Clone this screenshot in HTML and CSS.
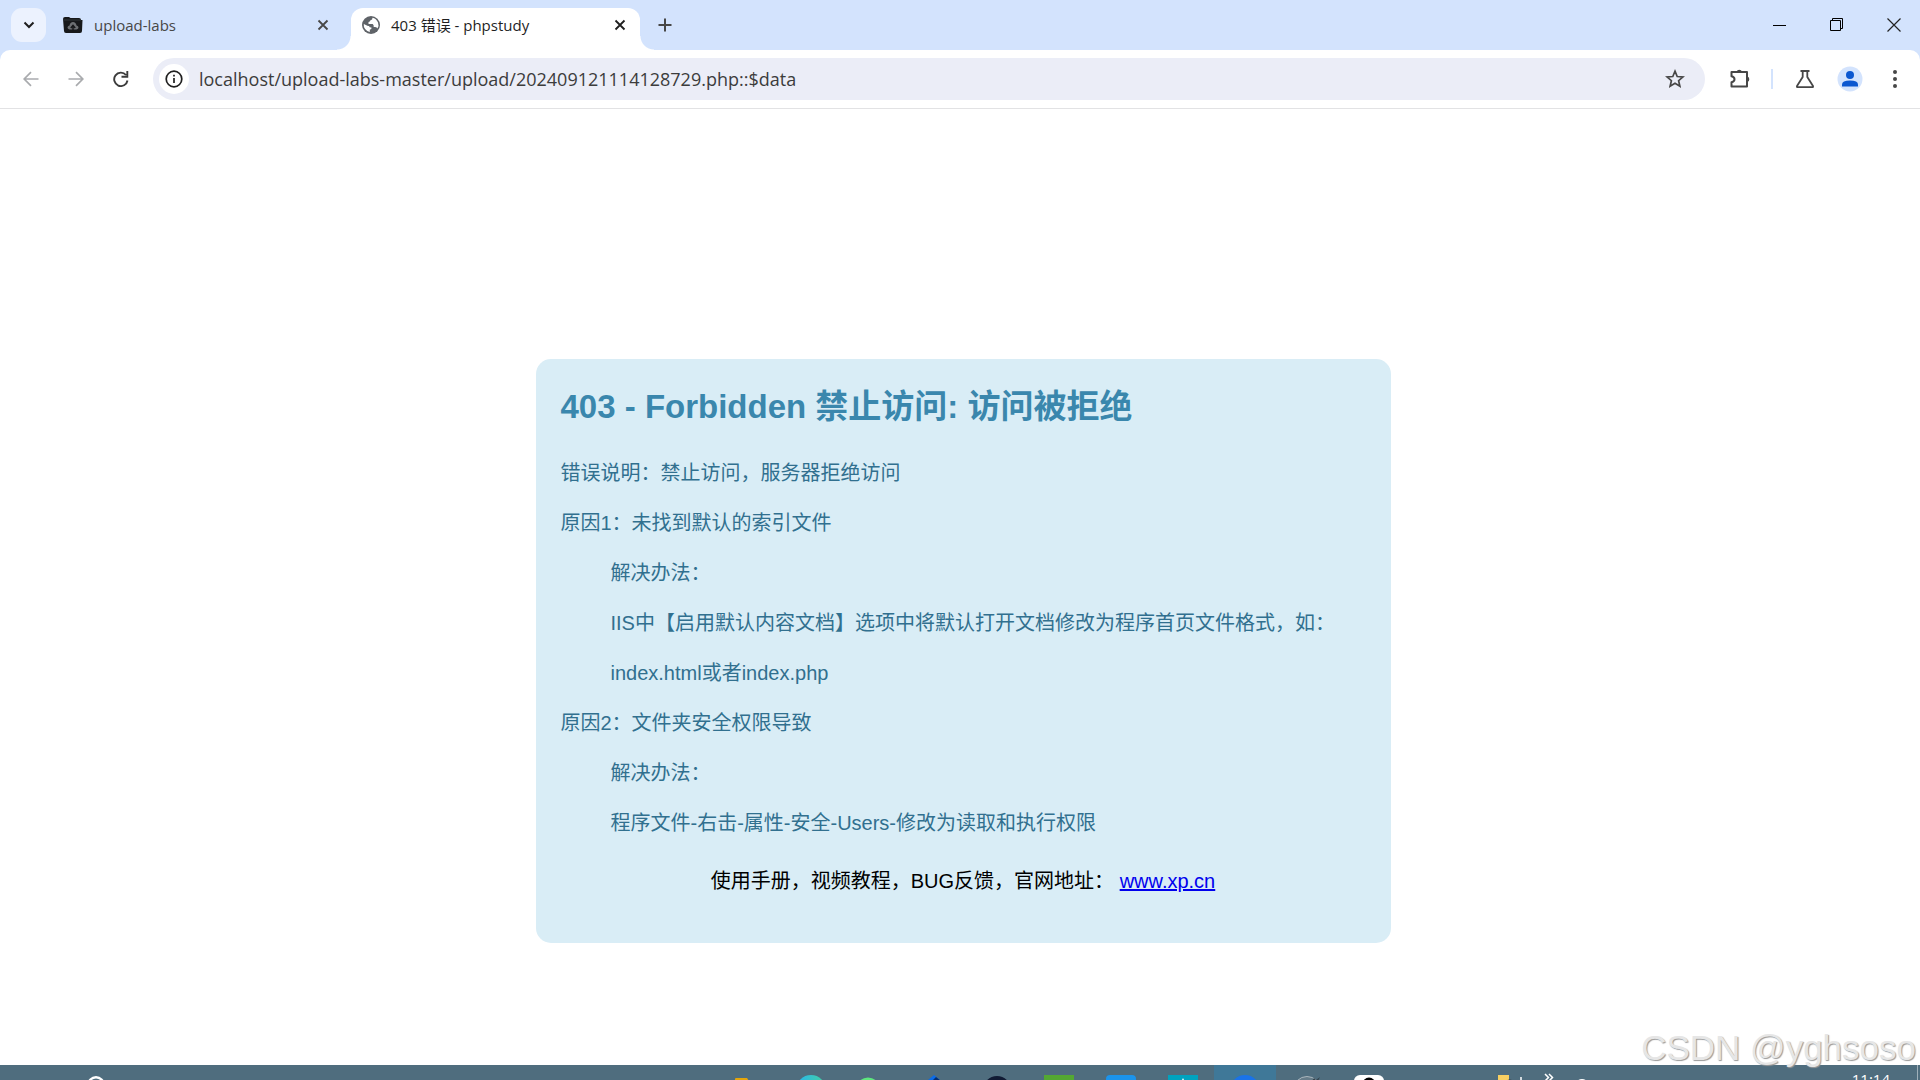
FILE: index.html
```html
<!DOCTYPE html>
<html lang="zh-CN">
<head>
<meta charset="utf-8">
<title>403 错误 - phpstudy</title>
<link rel="stylesheet" href="styles.css">
</head>
<body>
<header class="browser">
  <div class="tabstrip">
    <button class="tab-search" type="button" aria-label="搜索标签页">
      <svg width="12" height="8" viewBox="0 0 12 8" fill="none" stroke="#1f1f1f" stroke-width="2"><path d="M1.5 1.5 6 6l4.5-4.5"/></svg>
    </button>
    <div class="tab">
      <svg width="20" height="18" viewBox="0 0 20 18"><path d="M0 3q0-2 2-2h4l1.500 1H16q2 0 2 2h1.500l-.5 11q0 2-2 2H3q-2 0-2-2z" fill="#17191b"/><path d="M0 4h18" stroke="#33383a"/><path d="M6.500 13.500q-2-.3-2-2t2-2q.7-3.500 3.500-3.500t3.500 3.500q2 .3 2 2t-2 2z" fill="#6c6f72"/><path d="M10 15.500V10M7.800 12 10 9.500l2.200 2.500" fill="none" stroke="#17191b" stroke-width="1.500"/></svg>
      <span class="tab-title">upload-labs</span>
      <button class="tab-close" type="button" aria-label="关闭 upload-labs">
        <svg width="12" height="12" viewBox="0 0 12 12" fill="none" stroke="#474747" stroke-width="1.800"><path d="m1.500 1.500 9 9m0-9-9 9"/></svg>
      </button>
    </div>
    <div class="tab tab-active">
      <svg width="18" height="18" viewBox="0 0 18 18"><circle cx="9" cy="9" r="9" fill="#5f6368"/><path d="M10.500 1.700Q10.600 4 8.500 4.200q-.5 1.800-2 1.800v2h4.200q1.300.8 1 3h1.500q1.800.1 2.200 1.600Q17.300 9.500 16 6.500q-1.800-4-5.500-4.800zM1.800 8q-.4 2.800 1.300 5.100 1.900 2.500 4.700 2.800v-2.200q2.200-.2 1.700-2.200Q7.200 11.500 7 10q-1.600.2-2.600-.7z" fill="#fff"/></svg>
      <span class="tab-title">403 错误 - phpstudy</span>
      <button class="tab-close" type="button" aria-label="关闭 403 错误">
        <svg width="12" height="12" viewBox="0 0 12 12" fill="none" stroke="#1f1f1f" stroke-width="1.800"><path d="m1.500 1.500 9 9m0-9-9 9"/></svg>
      </button>
    </div>
    <button class="new-tab" type="button" aria-label="新标签页">
      <svg width="14" height="14" viewBox="0 0 14 14" stroke="#474747" stroke-width="2"><path d="M7 .5v13M.5 7h13"/></svg>
    </button>
    <div class="window-buttons">
      <button type="button" aria-label="最小化"><svg width="14" height="14" viewBox="0 0 14 14"><path d="M0 7.500h13" stroke="#000"/></svg></button>
      <button type="button" aria-label="还原"><svg width="14" height="14" viewBox="0 0 14 14" fill="none" stroke="#000"><path d="M.5 2.500h10v10H.5zM2.500 2.500v-2h10v10h-2"/></svg></button>
      <button type="button" aria-label="关闭"><svg width="14" height="14" viewBox="0 0 14 14" stroke="#222" stroke-width="1.200"><path d="m.5.5 13 13m0-13-13 13"/></svg></button>
    </div>
  </div>
  <div class="toolbar">
    <div class="nav-buttons">
      <button type="button" aria-label="后退"><svg width="16" height="16" viewBox="0 0 16 16" fill="none" stroke="#a9abae" stroke-width="1.700"><path d="M15.500 8H1.500M8 1.200 1.200 8 8 14.800"/></svg></button>
      <button type="button" aria-label="前进"><svg width="16" height="16" viewBox="0 0 16 16" fill="none" stroke="#a9abae" stroke-width="1.700"><path d="M.5 8h14M8 1.200 14.800 8 8 14.800"/></svg></button>
      <button type="button" aria-label="重新加载"><svg width="16" height="16" viewBox="0 0 16 16" fill="none" stroke="#3c3c3c" stroke-width="1.900"><path d="M13 4A6.700 6.700 0 1 0 14.500 9.500M14.300 0v5.800H8.500"/></svg></button>
    </div>
    <div class="omnibox">
      <button class="site-info" type="button" aria-label="查看网站信息">
        <svg width="18" height="18" viewBox="0 0 18 18" fill="none" stroke="#1f1f1f" stroke-width="1.700"><circle cx="9" cy="9" r="7.800"/><path d="M9 8v5M9 4.800v1.800"/></svg>
      </button>
      <input class="url" type="text" aria-label="地址栏" value="localhost/upload-labs-master/upload/202409121114128729.php::$data">
      <button class="bookmark" type="button" aria-label="收藏">
        <svg width="20" height="20" viewBox="0 0 20 20" fill="none" stroke="#474747" stroke-width="1.700"><path d="m10 2.200 2.200 5.300 5.700.5-4.300 3.700 1.300 5.600-4.900-3-4.900 3 1.300-5.600L2.100 8l5.700-.5z"/></svg>
      </button>
    </div>
    <div class="actions">
      <button type="button" aria-label="扩展程序"><svg width="22" height="22" viewBox="0 0 22 22"><path d="M2.500 4h15.500v14.500H2.500v-4.200q3-.6 3-3t-3-3z" fill="none" stroke="#474747" stroke-width="2" stroke-linejoin="round"/><path d="M7.500 3.500a3 3 0 0 1 5.500 0zM18.500 8.500a3 3 0 0 1 0 5.500z" fill="#474747"/></svg></button>
      <span class="divider"></span>
      <button type="button" aria-label="实验室"><svg width="20" height="20" viewBox="0 0 20 20" fill="none" stroke="#474747" stroke-width="1.800"><path d="M5.500 2h9M7.700 2v6L2 17q-.4 1.200.8 1.200h14.400q1.200 0 .8-1.200l-5.700-9V2" stroke-linejoin="round"/></svg></button>
      <button type="button" aria-label="个人资料"><svg width="26" height="26" viewBox="0 0 26 26"><circle cx="13" cy="13" r="12.500" fill="#d3e3fd"/><circle cx="13" cy="9" r="4" fill="#0b57d0"/><path d="M5 20.500v-2q0-4 8-4t8 4v2z" fill="#0b57d0"/></svg></button>
      <button type="button" aria-label="菜单"><svg width="6" height="18" viewBox="0 0 6 18" fill="#474747"><circle cx="3" cy="2" r="2"/><circle cx="3" cy="9" r="2"/><circle cx="3" cy="16" r="2"/></svg></button>
    </div>
  </div>
</header>

<main class="page">
  <section class="error-card">
    <h2 class="error-title">403 - Forbidden 禁止访问: 访问被拒绝</h2>
    <div class="error-body">
      <p>错误说明：禁止访问，服务器拒绝访问</p>
      <p>原因1：未找到默认的索引文件</p>
      <div class="solution">
        <p>解决办法：</p>
        <p>IIS中【启用默认内容文档】选项中将默认打开文档修改为程序首页文件格式，如：index.html或者index.php</p>
      </div>
      <p>原因2：文件夹安全权限导致</p>
      <div class="solution">
        <p>解决办法：</p>
        <p>程序文件-右击-属性-安全-Users-修改为读取和执行权限</p>
      </div>
    </div>
    <p class="error-footer">使用手册，视频教程，BUG反馈，官网地址： <a href="https://www.xp.cn">www.xp.cn</a></p>
  </section>
</main>

<footer class="taskbar">
  <div class="task-left">
    <svg width="18" height="18" viewBox="0 0 18 18"><circle cx="9" cy="9" r="7.800" fill="none" stroke="#fff" stroke-width="2.400"/></svg>
  </div>
  <div class="task-apps">
    <span class="app"><svg width="30" height="30" viewBox="0 0 30 30"><path d="M1 30V4q0-1 1-1h11l2 3v24z" fill="#e5a50a"/></svg></span>
    <span class="app"><svg width="30" height="30" viewBox="0 0 30 30"><defs><linearGradient id="wave"><stop offset="0" stop-color="#28b5ee"/><stop offset="1" stop-color="#45d1a0"/></linearGradient></defs><circle cx="15" cy="15" r="15" fill="url(#wave)"/></svg></span>
    <span class="app"><svg width="30" height="30" viewBox="0 0 30 30"><ellipse cx="10" cy="12" rx="11" ry="9.500" fill="#5ee87e"/></svg></span>
    <span class="app"><svg width="30" height="30" viewBox="0 0 30 30"><path d="M14 0 26 10 14 20 2 10z" fill="#0a6be8"/><path d="m16 2 10 8-10 8-7-9z" fill="#072e6b"/></svg></span>
    <span class="app"><svg width="30" height="30" viewBox="0 0 30 30"><circle cx="15" cy="15" r="14" fill="#111b34"/></svg></span>
    <span class="app"><svg width="30" height="30" viewBox="0 0 30 30"><path d="M0 0h30v30H0z" fill="#54a833"/></svg></span>
    <span class="app"><svg width="30" height="30" viewBox="0 0 30 30"><rect width="30" height="30" rx="4" fill="#1b94ec"/></svg></span>
    <span class="app"><svg width="30" height="30" viewBox="0 0 30 30"><path d="M0 0h30v30H0z" fill="#00a3bf"/><path d="m15 3 2 4h-4z" fill="#fff"/></svg></span>
    <span class="app app-current"><svg width="30" height="30" viewBox="0 0 30 30"><circle cx="15" cy="15" r="15" fill="#1a73e8"/></svg></span>
    <span class="app"><svg width="30" height="30" viewBox="0 0 30 30"><circle cx="15" cy="15" r="13.500" fill="#667c89" stroke="#aab6bd"/><path d="m19 7 3-4 2 2 4-3-2 4z" fill="#34434d"/></svg></span>
    <span class="app"><svg width="30" height="30" viewBox="0 0 30 30"><rect width="30" height="30" rx="6" fill="#fff"/><circle cx="15" cy="9" r="6.500" fill="#000"/></svg></span>
  </div>
  <div class="task-tray">
    <svg class="tray-folder" width="24" height="12" viewBox="0 0 24 12"><path d="M0 1h11v11H0z" fill="#f8cf62"/><path d="M7 12q0-8 7-6v6z" fill="#33343a"/><path d="M23 3v9" stroke="#fff" stroke-width="1.500"/></svg>
    <svg class="tray-more" width="10" height="10" viewBox="0 0 10 10" fill="none" stroke="#fff" stroke-width="1.500"><path d="m1 1 3.500 3.500L1 8m4-7 3.500 3.500L5 8"/></svg>
    <svg class="tray-ring" width="16" height="12" viewBox="0 0 16 12"><circle cx="8" cy="11" r="7" fill="#fff"/></svg>
    <time class="clock">11:14</time>
    <span class="show-desktop"></span>
  </div>
</footer>
<div class="watermark">CSDN @yghsoso</div>
</body>
</html>
```
FILE: styles.css
```css
* { box-sizing: border-box; }

body {
  margin: 0;
  min-height: 100vh;
  display: flex;
  flex-direction: column;
  position: relative;
  overflow: hidden;
  background: #fff;
  font-family: "Liberation Sans", "Noto Sans CJK SC", sans-serif;
}

p, h2 { margin: 0; }
svg { display: block; flex: none; }

button {
  display: flex;
  align-items: center;
  justify-content: center;
  flex: none;
  padding: 0;
  border: 0;
  background: none;
}

/* Browser chrome */
.browser {
  background: #d3e3fd;
  font-family: "Open Sans", "Noto Sans CJK SC", sans-serif;
}

.tabstrip {
  display: flex;
  height: 50px;
  padding: 8px 0 0 11px;
}

.tab-search {
  width: 35px;
  height: 34px;
  border-radius: 11px;
  background: #ecf2fe;
}

.tab {
  display: flex;
  align-items: center;
  width: 289px;
  height: 42px;
  padding: 0 14px 8px 11px;
  gap: 11px;
  color: #474747;
  font-size: 15px;
  line-height: 20px;
}

.tab:not(.tab-active) {
  margin-left: 6px;
  width: 299px;
  padding-right: 22px;
}

.tab-active {
  position: relative;
  border-radius: 12px 12px 0 0;
  background: #fff;
  color: #1f1f1f;
}

.tab-active::before,
.tab-active::after {
  content: "";
  position: absolute;
  bottom: 0;
  width: 14px;
  height: 14px;
}

.tab-active::before {
  right: 100%;
  background: radial-gradient(circle at 0 0, #d3e3fd 13px, #fff 14px);
}

.tab-active::after {
  left: 100%;
  background: radial-gradient(circle at 100% 0, #d3e3fd 13px, #fff 14px);
}

.tab-title { flex: 1; white-space: nowrap; }

.new-tab {
  width: 34px;
  height: 34px;
  margin-left: 8px;
}

.window-buttons {
  display: flex;
  gap: 5px;
  margin-left: auto;
  height: 34px;
}

.window-buttons button { width: 52px; }

.toolbar {
  display: flex;
  align-items: center;
  height: 59px;
  border-bottom: 1px solid #e2e2e4;
  border-radius: 10px 10px 0 0;
  background: #fff;
}

.nav-buttons {
  display: flex;
  padding-left: 8px;
}

.nav-buttons button { width: 45px; height: 42px; }

.omnibox {
  display: flex;
  align-items: center;
  flex: 1;
  height: 42px;
  margin-left: 10px;
  padding: 0 20px 0 6px;
  border-radius: 21px;
  background: #ebedf7;
}

.site-info {
  width: 30px;
  height: 30px;
  border-radius: 50%;
  background: #fff;
}

.url {
  flex: 1;
  min-width: 0;
  margin: 0 10px;
  padding: 0;
  border: 0;
  outline: 0;
  background: none;
  color: #3c3c3c;
  font-family: inherit;
  font-size: 18px;
}

.actions {
  display: flex;
  align-items: center;
  padding: 0 3px 0 12px;
}

.actions button { width: 45px; height: 42px; }

.divider {
  width: 2px;
  height: 20px;
  margin: 0 9px;
  background: #d3e3fd;
}

/* Error page */
.page {
  flex: 1;
  padding: 250px 0 0 6px;
}

.error-card {
  max-width: 855px;
  margin: 0 auto;
  padding: 24px 25px 37px;
  border-radius: 15px;
  background: #d9edf6;
  color: #31708f;
  font-size: 20px;
  line-height: 50px;
}

.error-title {
  margin-bottom: 17px;
  color: #3a87ad;
  font-size: 33px;
  line-height: 48px;
}

.solution { padding-left: 50px; }

.error-footer {
  margin-top: 8px;
  color: #000;
  text-align: center;
}

.error-footer a { color: #00e; }

/* Taskbar */
.taskbar {
  display: grid;
  grid-template-columns: 718px 1fr auto;
  height: 15px;
  overflow: hidden;
  background: #4f6d7e;
}

.task-left { padding: 11px 0 0 87px; }
.task-apps { display: flex; }

.app {
  display: flex;
  justify-content: center;
  width: 62px;
  height: 40px;
  padding-top: 10px;
}

.app-current { background: #3f7898; }

.task-tray {
  display: flex;
  align-items: flex-start;
}

.tray-folder { margin: 9px 22px 0 0; }
.tray-more { margin-top: 8px; }
.tray-ring { margin: 10px 0 0 20px; }

.clock {
  margin: 4px 27px 0 262px;
  color: #fff;
  font-family: "Open Sans", sans-serif;
  font-size: 15px;
  line-height: 20px;
}

.show-desktop {
  align-self: stretch;
  width: 3px;
  border-left: 1px solid #9fb0ba;
}

.watermark {
  position: absolute;
  right: 4px;
  bottom: 12px;
  color: #e6e6e6;
  font-size: 35px;
  line-height: 40px;
  text-shadow: 1px 1px 1px #999;
}
```
